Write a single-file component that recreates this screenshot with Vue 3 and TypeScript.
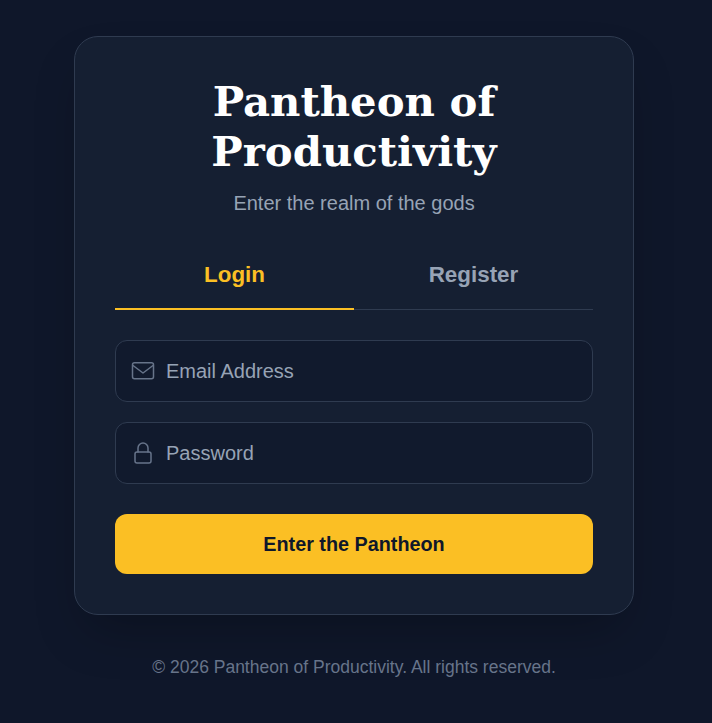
<script setup lang="ts">
import { ref } from 'vue'
const mode = ref<'login' | 'register'>('login')
</script>

<template>
  <main class="page">
    <section class="card">
      <h1 class="title">Pantheon of Productivity</h1>
      <p class="subtitle">Enter the realm of the gods</p>
      <div class="tabs">
        <button class="tab" :class="{ active: mode === 'login' }" @click="mode = 'login'">Login</button>
        <button class="tab" :class="{ active: mode === 'register' }" @click="mode = 'register'">Register</button>
      </div>
      <form class="form" @submit.prevent>
        <label class="field">
          <svg class="icon" width="24" height="24" viewBox="0 0 24 24" fill="none" stroke="currentColor" stroke-width="1.5" stroke-linecap="round" stroke-linejoin="round">
            <rect x="1.5" y="3.75" width="21" height="16" rx="2" />
            <path d="M2 6.5l10 7.5 10-7.5" />
          </svg>
          <input class="input" type="email" placeholder="Email Address" />
        </label>
        <label class="field">
          <svg class="icon" width="24" height="24" viewBox="0 0 24 24" fill="none" stroke="currentColor" stroke-width="1.5" stroke-linecap="round" stroke-linejoin="round">
            <rect x="4" y="11" width="16" height="11" rx="2" />
            <path d="M7 11V7a5 5 0 0 1 10 0v4" />
          </svg>
          <input class="input" type="password" placeholder="Password" />
        </label>
        <button class="submit" type="submit">Enter the Pantheon</button>
      </form>
    </section>
    <footer class="footer">© 2026 Pantheon of Productivity. All rights reserved.</footer>
  </main>
</template>

<style>
html, body { margin: 0; background: #0f172a; }
</style>

<style scoped>
.page {
  width: 708px;
  min-height: 723px;
  box-sizing: border-box;
  padding-top: 36px;
  display: flex;
  flex-direction: column;
  align-items: center;
  background: #0f172a;
  font-family: "Liberation Sans", Arial, sans-serif;
}
.card {
  width: 560px;
  box-sizing: border-box;
  padding: 40px;
  background: #151f32;
  border: 1px solid #2f3b50;
  border-radius: 24px;
  box-shadow: 0 25px 50px -12px rgba(0, 0, 0, 0.25);
}
.title {
  margin: 0;
  text-align: center;
  color: #fff;
  font-family: "DejaVu Serif", Georgia, serif;
  font-size: 41.8px;
  line-height: 50px;
  font-weight: 700;
}
.subtitle {
  margin: 12px 0 0;
  text-align: center;
  color: #97a3b5;
  font-size: 20px;
  line-height: 28px;
}
.tabs {
  display: flex;
  margin-top: 24px;
  border-bottom: 1px solid #2f3b50;
}
.tab {
  flex: 1;
  height: 69px;
  padding: 0;
  background: none;
  border: 0;
  margin-bottom: -1px;
  border-bottom: 2px solid transparent;
  color: #97a3b5;
  font: 700 22.4px "Liberation Sans", Arial, sans-serif;
  cursor: pointer;
}
.tab.active {
  color: #fbbf24;
  border-bottom-color: #fbbf24;
}
.form {
  display: flex;
  flex-direction: column;
  gap: 20px;
  margin-top: 30px;
}
.field {
  display: flex;
  align-items: center;
  gap: 11px;
  height: 62px;
  box-sizing: border-box;
  padding: 0 15px;
  background: #111a2d;
  border: 1px solid #2f3b50;
  border-radius: 12px;
  color: #67748a;
}
.icon { flex: none; }
.input {
  flex: 1;
  min-width: 0;
  background: none;
  border: 0;
  outline: none;
  padding: 0;
  color: #e2e8f0;
  font: 20px "Liberation Sans", Arial, sans-serif;
}
.input::placeholder { color: #97a3b5; opacity: 1; }
.submit {
  height: 60px;
  margin-top: 10px;
  background: #fbbf24;
  border: 0;
  border-radius: 12px;
  color: #0f172a;
  font: 700 19.8px "Liberation Sans", Arial, sans-serif;
  cursor: pointer;
}
.footer {
  margin-top: 42px;
  color: #67748a;
  font-size: 17.5px;
  line-height: 20px;
  text-align: center;
}
</style>
